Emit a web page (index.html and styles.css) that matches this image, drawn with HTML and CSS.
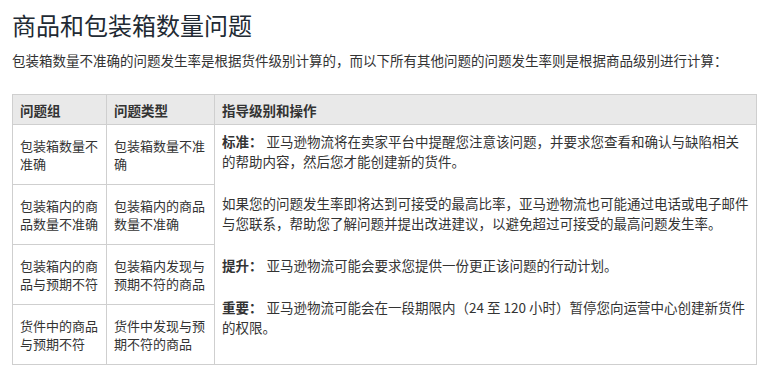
FILE: index.html
```html
<!DOCTYPE html>
<html lang="zh-CN">
<head>
<meta charset="utf-8">
<title>商品和包装箱数量问题</title>
<link rel="stylesheet" href="styles.css">
</head>
<body>
<h1 class="title">商品和包装箱数量问题</h1>
<p class="intro">包装箱数量不准确的问题发生率是根据货件级别计算的，而以下所有其他问题的问题发生率则是根据商品级别进行计算：</p>
<table class="issues">
  <colgroup>
    <col class="c1"><col class="c2"><col class="c3">
  </colgroup>
  <thead>
    <tr>
      <th>问题组</th>
      <th>问题类型</th>
      <th>指导级别和操作</th>
    </tr>
  </thead>
  <tbody>
    <tr>
      <td class="cell">包装箱数量不准确</td>
      <td class="cell">包装箱数量不准确</td>
      <td class="guide" rowspan="4">
        <p><b class="label">标准：</b>亚马逊物流将在卖家平台中提醒您注意该问题，并要求您查看和确认与缺陷相关的帮助内容，然后您才能创建新的货件。</p>
        <p>如果您的问题发生率即将达到可接受的最高比率，亚马逊物流也可能通过电话或电子邮件与您联系，帮助您了解问题并提出改进建议，以避免超过可接受的最高问题发生率。</p>
        <p><b class="label">提升：</b>亚马逊物流可能会要求您提供一份更正该问题的行动计划。</p>
        <p><b class="label">重要：</b>亚马逊物流可能会在一段期限内（24 至 120 小时）暂停您向运营中心创建新货件的权限。</p>
      </td>
    </tr>
    <tr>
      <td class="cell">包装箱内的商品数量不准确</td>
      <td class="cell">包装箱内的商品数量不准确</td>
    </tr>
    <tr>
      <td class="cell">包装箱内的商品与预期不符</td>
      <td class="cell">包装箱内发现与预期不符的商品</td>
    </tr>
    <tr>
      <td class="cell">货件中的商品与预期不符</td>
      <td class="cell">货件中发现与预期不符的商品</td>
    </tr>
  </tbody>
</table>
</body>
</html>
```
FILE: styles.css
```css
html, body {
  margin: 0;
  padding: 0;
  background: #ffffff;
}
body {
  padding: 10px 9px 0 12px;
  font-family: "Noto Sans CJK SC", "Noto Sans", "Liberation Sans", sans-serif;
  color: #333333;
  font-size: 13.5px;
}
.title {
  margin: 0;
  font-size: 24px;
  line-height: 30px;
  font-weight: 400;
  color: #222a33;
}
.intro {
  margin: 10px 0 24px;
  line-height: 20px;
}
.issues {
  border-collapse: collapse;
  width: 745px;
  table-layout: fixed;
  border: 1px solid #cfcfcf;
}
.c1 { width: 94px; }
.c2 { width: 108px; }
.c3 { width: auto; }
.issues th {
  background: #e9e9e9;
  border: 1px solid #cfcfcf;
  height: 30px;
  padding: 0 7px;
  text-align: left;
  font-weight: 700;
  line-height: 20px;
  box-sizing: border-box;
}
.issues td {
  border: 1px solid #cfcfcf;
}
.cell {
  height: 59px;
  padding: 0 7px;
  line-height: 18px;
  vertical-align: middle;
  font-size: 13px;
}
.guide {
  vertical-align: top;
  padding: 6px 7px 0 7px;
  line-height: 20px;
}
.guide p {
  margin: 0 0 22px;
}
.label {
  font-weight: 700;
  margin-right: 4px;
}
```
